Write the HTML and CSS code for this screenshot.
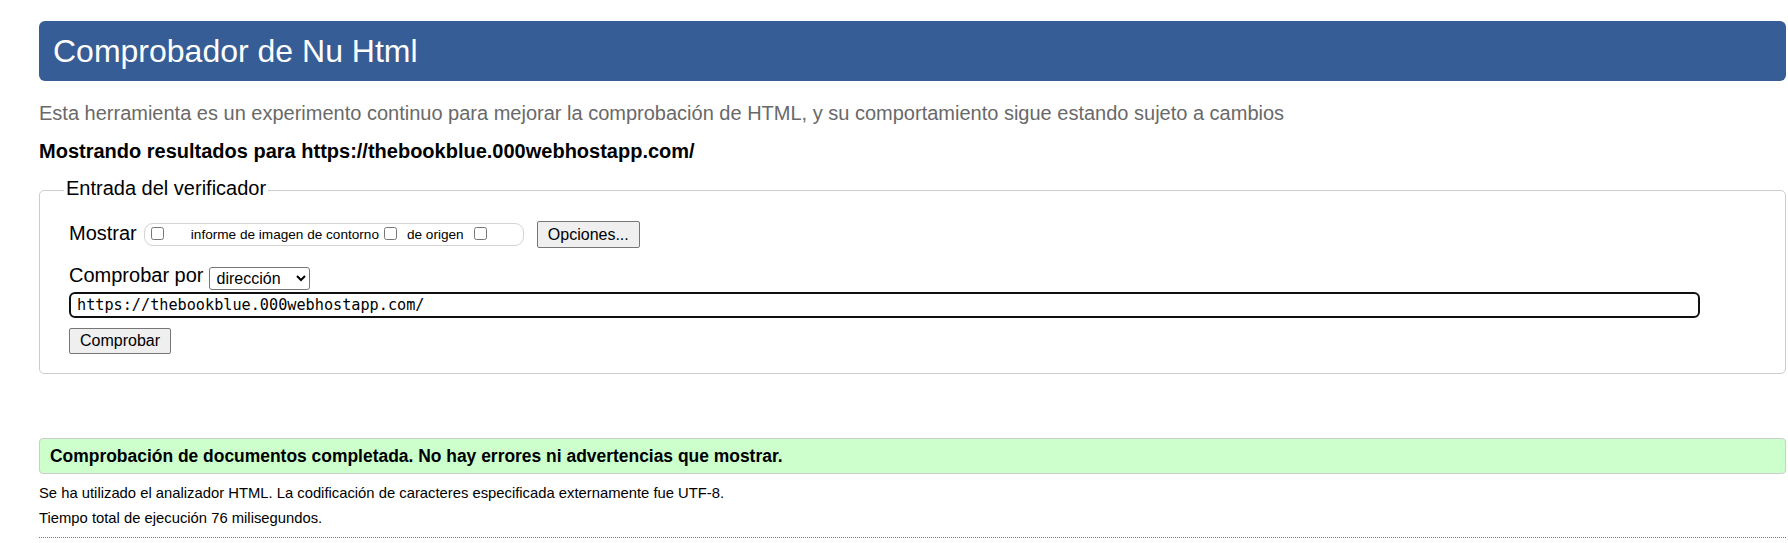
FILE: index.html
```html
<!DOCTYPE html>
<html lang="es">
<head>
<meta charset="utf-8">
<title>Comprobador de Nu Html</title>
<link rel="stylesheet" href="styles.css">
</head>
<body>
<h1 class="title">Comprobador de Nu Html</h1>
<p class="lead">Esta herramienta es un experimento continuo para mejorar la comprobación de HTML, y su comportamiento sigue estando sujeto a cambios</p>
<p class="showing">Mostrando resultados para https://thebookblue.000webhostapp.com/</p>
<form class="checker">
  <fieldset class="input-box">
    <legend class="input-legend">Entrada del verificador</legend>
    <div class="row row-show">
      <span class="label label-show">Mostrar</span>
      <span class="opts">
        <input type="checkbox" class="cb cb-first">
        <label class="opt-text opt-first">informe de imagen de contorno</label>
        <input type="checkbox" class="cb cb-second">
        <label class="opt-text opt-second">de origen</label>
        <input type="checkbox" class="cb cb-third">
      </span>
      <button type="button" class="btn btn-options">Opciones...</button>
    </div>
    <div class="row row-by">
      <label class="label label-by">Comprobar por</label>
      <select class="by"><option>dirección</option></select>
    </div>
    <input class="url" type="text" value="https://thebookblue.000webhostapp.com/">
    <div class="row-submit"><button type="button" class="btn btn-submit">Comprobar</button></div>
  </fieldset>
</form>
<div class="success">Comprobación de documentos completada. No hay errores ni advertencias que mostrar.</div>
<p class="details details-first">Se ha utilizado el analizador HTML. La codificación de caracteres especificada externamente fue UTF-8.</p>
<p class="details">Tiempo total de ejecución 76 milisegundos.</p>
<hr class="rule">
</body>
</html>
```
FILE: styles.css
```css
html, body {
  background: #fff;
}
body {
  margin: 0;
  padding: 21px 2px 0 39px;
  font-family: "Liberation Sans", Arial, sans-serif;
  color: #000;
}
.title {
  margin: 0;
  height: 60px;
  line-height: 60px;
  padding: 0 14px;
  background: #365d95;
  color: #fff;
  font-size: 32px;
  font-weight: normal;
  border-radius: 6px;
}
.lead {
  margin: 20px 0 0;
  font-size: 20px;
  line-height: 24px;
  color: #696969;
}
.showing {
  margin: 15px 0 0;
  font-size: 20px;
  line-height: 22px;
  font-weight: bold;
}
.checker {
  margin: 14px 0 0;
}
.input-box {
  margin: 0;
  border: 1px solid #ccc;
  border-radius: 5px;
  padding: 17px 29px 19px 29px;
  min-width: 0;
}
.input-legend {
  font-size: 20px;
  line-height: 24px;
  padding: 0 2px 4px;
  margin-left: -5px;
}
.row {
  display: flex;
  align-items: center;
}
.row-show {
  height: 27px;
}
.label {
  font-size: 20px;
  line-height: 24px;
}
.label-show {
  padding-bottom: 3px;
}
.opts {
  display: flex;
  align-items: center;
  box-sizing: border-box;
  width: 380px;
  height: 23px;
  margin-left: 7px;
  border: 1px solid #d4d4d4;
  border-radius: 9px;
  padding: 0 0 0 6px;
}
.cb {
  margin: 0 0 3px 0;
  width: 13px;
  height: 13px;
  flex: none;
}
.opt-text {
  font-size: 13.6px;
  line-height: 16px;
  white-space: nowrap;
}
.opt-first {
  margin-left: 27px;
}
.cb-second {
  margin-left: 5px;
}
.opt-second {
  margin-left: 10px;
}
.cb-third {
  margin-left: 10px;
}
.btn {
  font-family: "Liberation Sans", Arial, sans-serif;
  font-size: 16px;
  color: #000;
  background: #efefef;
  border: 1px solid #767676;
  border-radius: 2px;
  padding: 0 10px;
  box-sizing: border-box;
  margin: 0;
}
.btn-options {
  margin-left: 13px;
  height: 27px;
  width: 103px;
}
.row-by {
  margin-top: 19px;
  height: 23px;
}
.label-by {
  padding-bottom: 7px;
}
.by {
  margin: 0 0 0 5px;
  width: 101px;
  height: 23px;
  font-family: "Liberation Sans", Arial, sans-serif;
  font-size: 16px;
  color: #000;
  background: #fff;
  border: 1px solid #767676;
  border-radius: 3px;
  padding: 0 0 0 3px;
}
.url {
  display: block;
  margin: 2px 0 0;
  width: 1631px;
  height: 26px;
  box-sizing: border-box;
  border: 2px solid #101010;
  border-radius: 6px;
  padding: 0 6px;
  font-family: "DejaVu Sans Mono", "Liberation Mono", monospace;
  font-size: 15.2px;
  color: #000;
  background: #fff;
  outline: none;
}
.row-submit {
  margin-top: 10px;
  display: flex;
}
.btn-submit {
  height: 26px;
  width: 102px;
}
.success {
  margin: 64px 0 0;
  box-sizing: border-box;
  height: 36px;
  line-height: 34px;
  padding: 0 10px;
  background: #ccffcc;
  border: 1px solid #ccc;
  border-radius: 4px;
  font-size: 17.45px;
  font-weight: bold;
}
.details {
  margin: 0;
  font-size: 14.8px;
  line-height: 25px;
}
.details-first {
  margin-top: 7px;
}
.rule {
  margin: 6px 0 0;
  height: 0;
  border: 0;
  border-top: 1px dotted #777;
}
```
